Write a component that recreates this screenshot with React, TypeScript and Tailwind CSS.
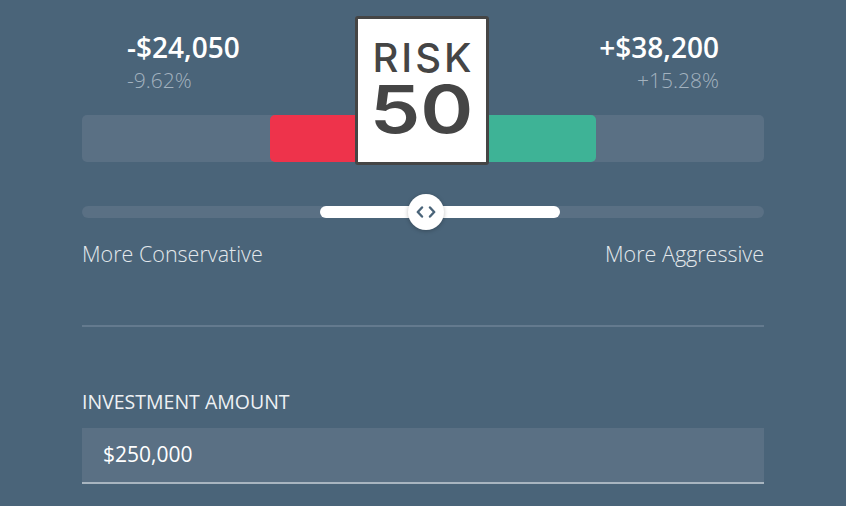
const outcome = {
    loss: { value: '-$24,050', pct: '-9.62%' },
    gain: { value: '+$38,200', pct: '+15.28%' },
};

export default function App() {
    return (
        <div
            className="w-[846px] h-[506px] overflow-hidden bg-[#4a6479] px-[82px] text-white"
            style={{ fontFamily: '"Open Sans", "Liberation Sans", sans-serif' }}
        >
            {/* Risk gauge */}
            <div className="relative pt-[29px]">
                <div className="flex justify-between px-[45px]">
                    <div>
                        <div className="text-[28px] font-semibold leading-[36px]">{outcome.loss.value}</div>
                        <div className="text-[21px] font-light leading-[30px] text-[#a3b2bf]">{outcome.loss.pct}</div>
                    </div>
                    <div className="text-right">
                        <div className="text-[28px] font-semibold leading-[36px]">{outcome.gain.value}</div>
                        <div className="text-[21px] font-light leading-[30px] text-[#a3b2bf]">{outcome.gain.pct}</div>
                    </div>
                </div>

                <div className="mt-[20px] flex h-[47px] rounded-[5px] bg-[#5a7084]">
                    <div className="w-[188px]" />
                    <div className="w-[152px] rounded-l-[5px] bg-[#ee334b]" />
                    <div className="w-[174px] rounded-r-[5px] bg-[#3eb396]" />
                </div>

                {/* Risk sign */}
                <div
                    className="absolute left-[273px] top-[16px] flex h-[149px] w-[134px] flex-col items-center rounded-[3px] border-[3px] border-[#454545] bg-white text-[#454545]"
                    style={{ fontFamily: 'Inter, "Liberation Sans", sans-serif' }}
                >
                    <div className="mt-[24px] pl-[3px] text-[40px] font-medium leading-[30px] tracking-[3px]">RISK</div>
                    <div className="mt-[11px] scale-x-[1.22] text-[66px] font-semibold leading-[50px]">50</div>
                </div>
            </div>

            {/* Slider */}
            <div className="relative mt-[44px] h-[12px] rounded-full bg-[#5a7084]">
                <div className="absolute left-[238px] top-0 h-[12px] w-[240px] rounded-full bg-white" />
                <div className="absolute left-[326px] top-[-12px] flex h-[36px] w-[36px] items-center justify-center rounded-full bg-white shadow-[0_1px_4px_rgba(0,0,0,0.25)]">
                    <svg width="20" height="12" viewBox="0 0 20 12" fill="none" stroke="#4a6479" strokeWidth="2.4" strokeLinecap="round" strokeLinejoin="round">
                        <path d="M6 1.5 L1.8 6 L6 10.5" />
                        <path d="M14 1.5 L18.2 6 L14 10.5" />
                    </svg>
                </div>
            </div>

            <div className="mt-[22px] flex justify-between text-[21.5px] font-light leading-[28px] text-[#e3e8ec]">
                <span>More Conservative</span>
                <span>More Aggressive</span>
            </div>

            <div className="mt-[57px] h-[2px] bg-[#647a8e]" />

            {/* Investment amount */}
            <div className="mt-[62px] text-[19.5px] leading-[26px] text-[#eef1f4]">INVESTMENT AMOUNT</div>
            <div className="mt-[13px] flex h-[56px] items-center border-b-2 border-[#a8b5c0] bg-[#5a7084] px-[21px] text-[21px] text-white">
                $250,000
            </div>
        </div>
    );
}
